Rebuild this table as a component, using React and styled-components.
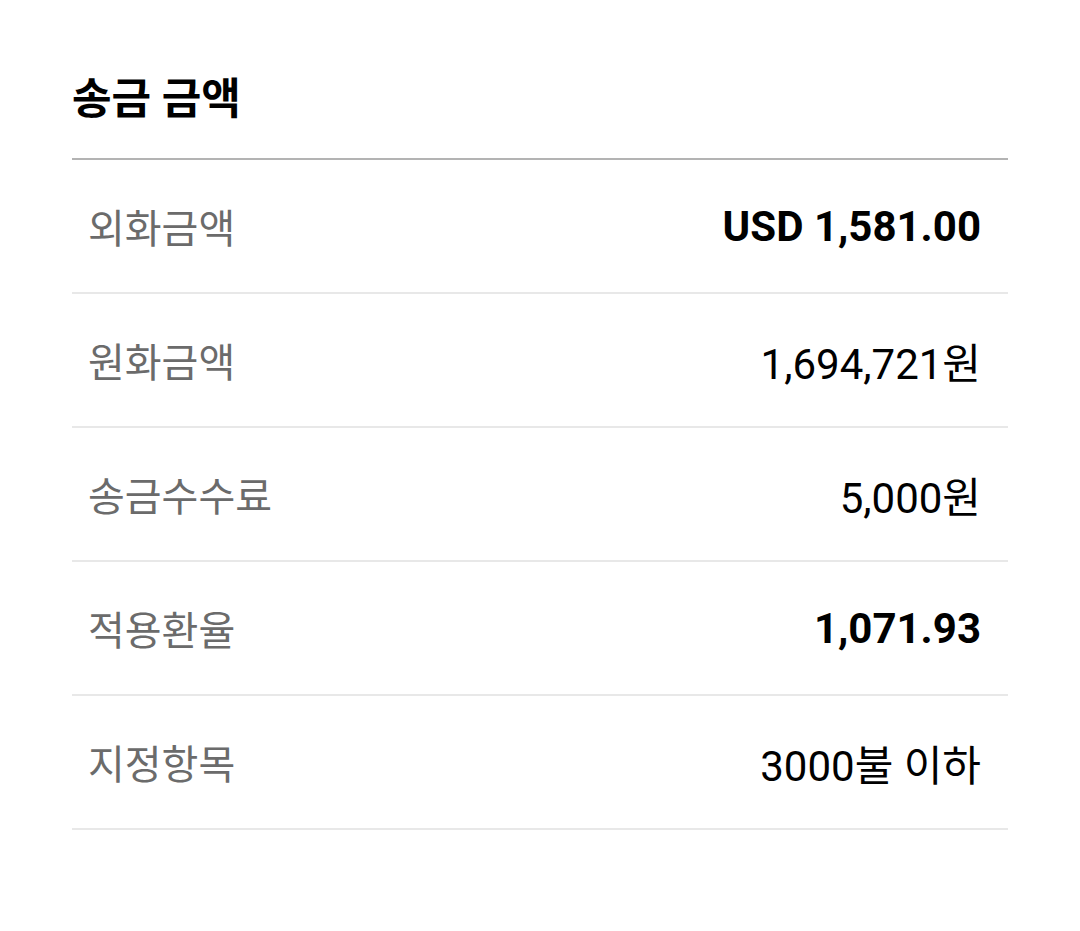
import React from "react";
import styled, { createGlobalStyle } from "styled-components";

const Global = createGlobalStyle`
  html, body { margin: 0; padding: 0; background: #fff; }
  body { font-family: Roboto, "Noto Sans CJK KR", sans-serif; }
`;

const Page = styled.div`
  padding: 68px 72px 0 72px;
`;

const Title = styled.h2`
  margin: 0;
  font-family: Roboto, "Noto Sans CJK KR", sans-serif;
  font-size: 43px;
  line-height: 62px;
  font-weight: 700;
  color: #000;
  padding-bottom: 28px;
  border-bottom: 2px solid #b3b3b3;
`;

const List = styled.div`
  display: flex;
  flex-direction: column;
`;

const Row = styled.div`
  display: flex;
  justify-content: space-between;
  align-items: center;
  height: 134px;
  box-sizing: border-box;
  border-bottom: 2px solid #e8e8e8;
  padding: 0 27px 0 16px;
`;

const Label = styled.span`
  font-family: "Noto Sans CJK KR", sans-serif;
  font-size: 40px;
  color: #6b6b6b;
`;

const Value = styled.span`
  font-family: Roboto, "Noto Sans CJK KR", sans-serif;
  font-size: 42px;
  font-weight: ${(p) => (p.$bold ? 700 : 400)};
  color: #000;
`;

const rows = [
  { label: "외화금액", value: "USD 1,581.00", bold: true },
  { label: "원화금액", value: "1,694,721원" },
  { label: "송금수수료", value: "5,000원" },
  { label: "적용환율", value: "1,071.93", bold: true },
  { label: "지정항목", value: "3000불 이하" },
];

export default function App() {
  return (
    <>
      <Global />
      <Page>
        <Title>송금 금액</Title>
        <List>
          {rows.map((r) => (
            <Row key={r.label}>
              <Label>{r.label}</Label>
              <Value $bold={r.bold}>{r.value}</Value>
            </Row>
          ))}
        </List>
      </Page>
    </>
  );
}
